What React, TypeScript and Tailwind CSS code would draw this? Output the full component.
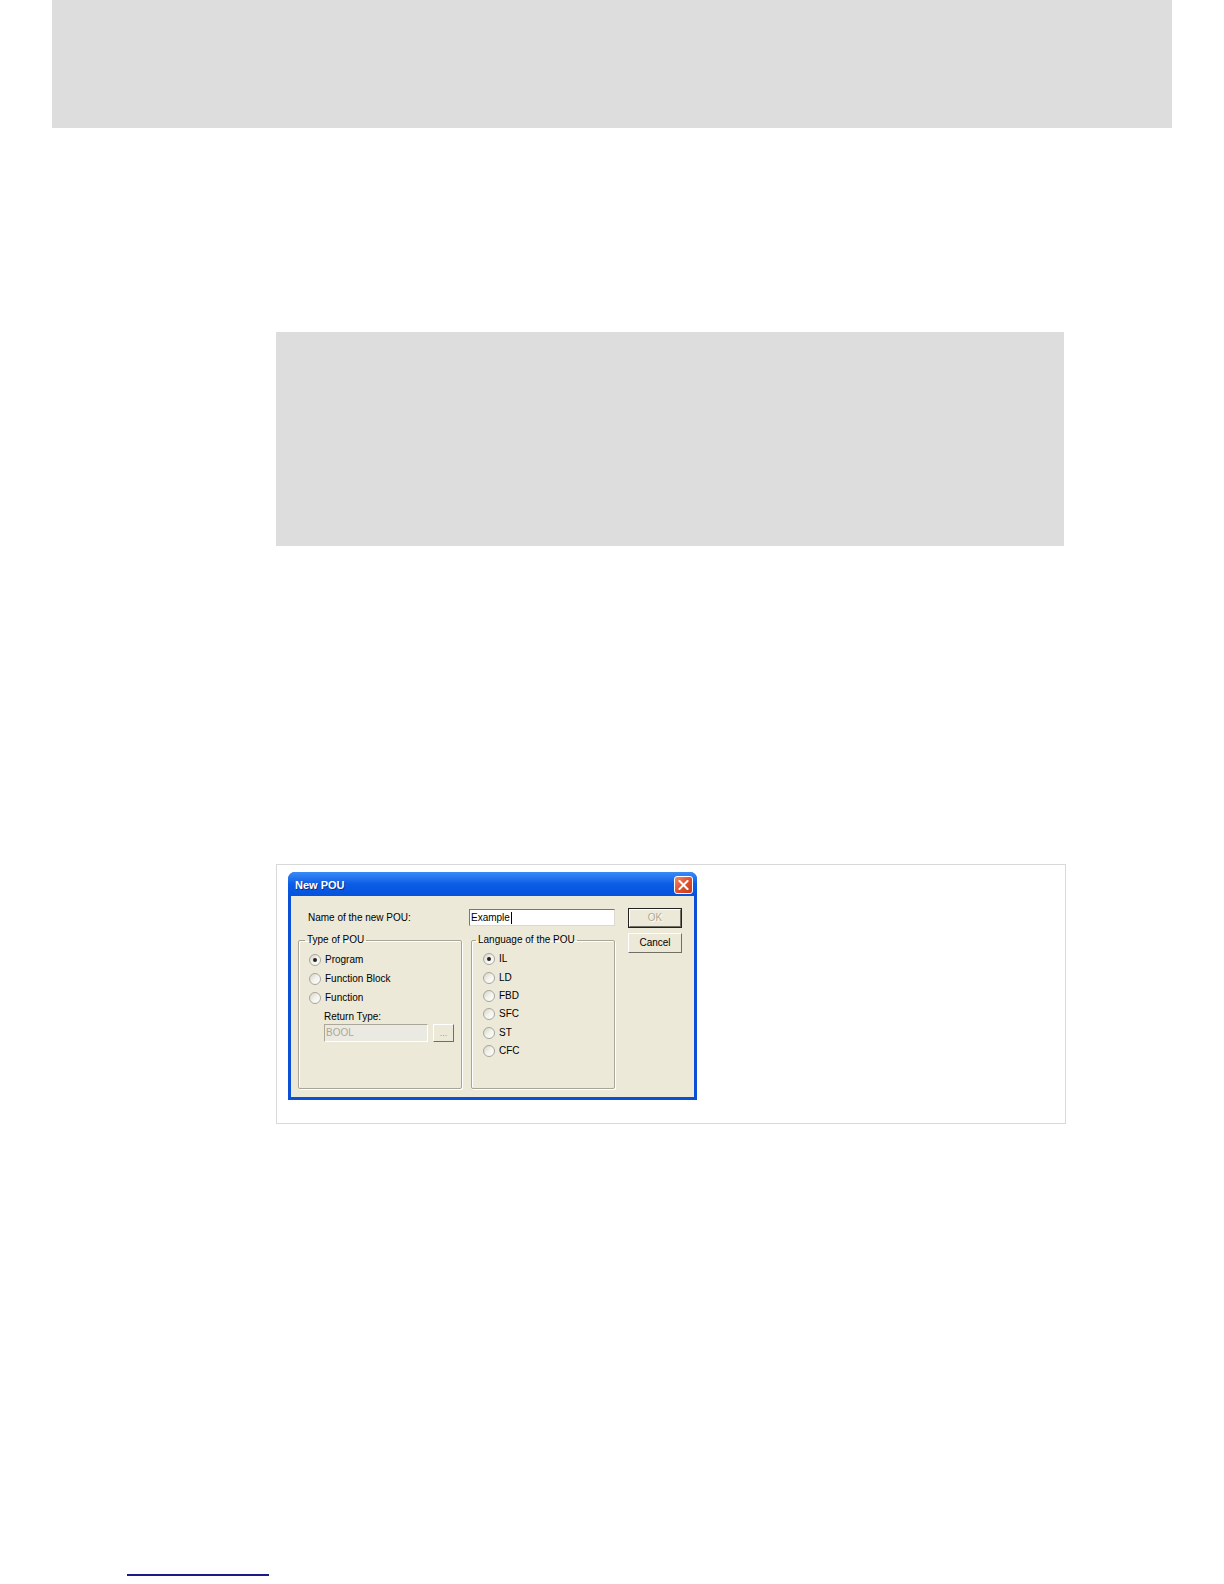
const UI_FONT = "font-['Liberation_Sans',Arial,sans-serif]";

function Radio({ checked }: { checked?: boolean }) {
  return (
    <span className="relative flex h-[12px] w-[12px] shrink-0 items-center justify-center rounded-full border border-[#a8a69b] bg-gradient-to-br from-[#d6d4c8] via-[#f3f2ec] to-white">
      {checked && <span className="h-[4px] w-[4px] rounded-full bg-[#222]" />}
    </span>
  );
}

function RadioRow({ label, checked, h }: { label: string; checked?: boolean; h: string }) {
  return (
    <div className={`flex items-center gap-[4px] ${h}`}>
      <Radio checked={checked} />
      <span className="text-[10px] leading-none text-black">{label}</span>
    </div>
  );
}

function ClassicButton({ label, disabled, isDefault }: { label: string; disabled?: boolean; isDefault?: boolean }) {
  return (
    <div className={`h-[20px] w-[54px] ${isDefault ? "border border-[#222]" : ""}`}>
      <div className="flex h-full w-full items-center justify-center border-t border-l border-t-white border-l-white border-r border-b border-r-[#716f64] border-b-[#716f64] bg-[#ece9d8]">
        <span
          className={`text-[10px] leading-none ${disabled ? "text-[#aca899] [text-shadow:1px_1px_0_#fff]" : "text-black"}`}
        >
          {label}
        </span>
      </div>
    </div>
  );
}

function NewPouDialog() {
  return (
    <div className={`flex h-[228px] w-[409px] flex-col overflow-hidden rounded-t-[7px] bg-[#0b4fd4] ${UI_FONT}`}>
      {/* title bar */}
      <div className="flex h-[24px] items-center justify-between bg-gradient-to-b from-[#3a8af7] via-[#0b5ce7] to-[#0652dc] pl-[7px] pr-[4px] pt-[2px]">
        <span className="text-[11px] font-bold text-white [text-shadow:1px_1px_0_#0a2f8a]">New POU</span>
        <div className="flex h-[18px] w-[19px] items-center justify-center rounded-[3px] border border-white bg-gradient-to-br from-[#f08a6a] via-[#e0502e] to-[#c8391a]">
          <svg width="11" height="10" viewBox="0 0 11 10">
            <path d="M1.5 1 L9.5 9 M9.5 1 L1.5 9" stroke="white" strokeWidth="2" strokeLinecap="square" />
          </svg>
        </div>
      </div>

      {/* body */}
      <div className="mx-[3px] mb-[3px] flex flex-1 gap-[13px] bg-[#ece9d8] pl-[7px] pt-[12px]">
        <div className="flex w-[317px] flex-col pt-[1px]">
          <div className="flex h-[17px] items-center">
            <span className="w-[171px] pl-[10px] text-[10px] leading-none text-black">Name of the new POU:</span>
            <div className="flex h-[17px] w-[146px] items-center border border-t-[#7a7868] border-l-[#7a7868] border-r-[#dcdad0] border-b-[#dcdad0] bg-white pl-[1px]">
              <span className="text-[10px] leading-none text-black">Example</span>
              <span className="ml-[1px] h-[12px] w-px bg-black" />
            </div>
          </div>

          <div className="mt-[8px] flex gap-[9px]">
            <fieldset className="h-[155px] w-[164px] rounded-[2px] border border-[#a7a59a] shadow-[1px_1px_0_#fff,inset_1px_1px_0_#fff]">
              <legend className="ml-[6px] px-[2px] text-[10px] leading-[12px] text-black">Type of POU</legend>
              <div className="pl-[10px] pt-[4px]">
                <RadioRow label="Program" checked h="h-[19px]" />
                <RadioRow label="Function Block" h="h-[19px]" />
                <RadioRow label="Function" h="h-[19px]" />
                <div className="flex h-[19px] items-center pl-[15px]">
                  <span className="text-[10px] leading-none text-black">Return Type:</span>
                </div>
                <div className="-mt-[2px] flex gap-[5px] pl-[15px]">
                  <div className="flex h-[18px] w-[104px] items-center border border-t-[#aca899] border-l-[#aca899] border-r-white border-b-white bg-[#ebeae2] pl-[1px]">
                    <span className="text-[10px] leading-none text-[#aca899]">BOOL</span>
                  </div>
                  <div className="flex h-[18px] w-[21px] items-end justify-center border-t border-l border-t-white border-l-white border-r border-b border-r-[#716f64] border-b-[#716f64] bg-[#ece9d8] pb-[3px]">
                    <span className="text-[9px] leading-none text-[#9c9a8f]">...</span>
                  </div>
                </div>
              </div>
            </fieldset>

            <fieldset className="h-[155px] w-[144px] rounded-[2px] border border-[#a7a59a] shadow-[1px_1px_0_#fff,inset_1px_1px_0_#fff]">
              <legend className="ml-[4px] px-[2px] text-[10px] leading-[12px] text-black">Language of the POU</legend>
              <div className="pl-[11px] pt-[4px]">
                <RadioRow label="IL" checked h="h-[18.4px]" />
                <RadioRow label="LD" h="h-[18.4px]" />
                <RadioRow label="FBD" h="h-[18.4px]" />
                <RadioRow label="SFC" h="h-[18.4px]" />
                <RadioRow label="ST" h="h-[18.4px]" />
                <RadioRow label="CFC" h="h-[18.4px]" />
              </div>
            </fieldset>
          </div>
        </div>

        <div className="flex flex-col gap-[5px]">
          <ClassicButton label="OK" disabled isDefault />
          <ClassicButton label="Cancel" />
        </div>
      </div>
    </div>
  );
}

export default function App() {
  return (
    <div className="min-h-[1584px] overflow-hidden bg-white">
      <div className="ml-[52px] h-[128px] w-[1120px] bg-[#dddddd]" />
      <div className="ml-[276px] mt-[204px] h-[214px] w-[788px] bg-[#dddddd]" />
      <div className="ml-[276px] mt-[318px] h-[260px] w-[790px] border border-[#d9d9d9] pl-[11px] pt-[7px]">
        <NewPouDialog />
      </div>
      <div className="ml-[127px] mt-[450px] h-[2px] w-[142px] bg-[#1a1a8c]" />
    </div>
  );
}
